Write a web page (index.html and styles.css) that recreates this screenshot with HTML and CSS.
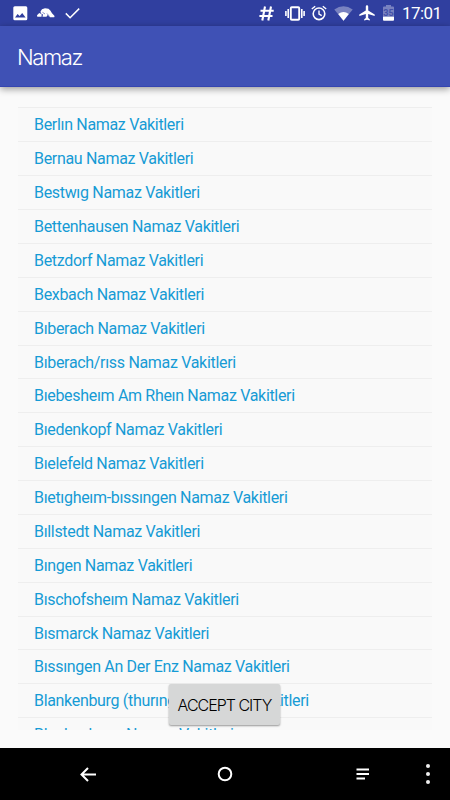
FILE: index.html
```
<!DOCTYPE html>
<html lang="tr">
<head>
    <meta charset="UTF-8">
    <meta name="viewport" content="width=device-width, initial-scale=1.0">
    <title>Namaz</title>
    <link rel="stylesheet" href="styles.css">
</head>
<body>
    <div id="app">
        <div class="status-bar">
            <svg class="icon-image" width="15" height="15" viewBox="0 0 15 15">
                <rect x="0.3" y="0.3" width="14" height="14" rx="1.5" fill="#fff"/>
                <path d="M2 11.6 4.6 8l2 2.1L9.2 7l3.4 4.6z" fill="#303f9f"/>
            </svg>
            <svg class="icon-prayer" width="18" height="10" viewBox="0 0 18 10">
                <path d="M3.500 3.500 5 1.200 8 .3l3.500.5 2 2 1.500 2.400 2.600 2.800-.4 1.300H13L10.500 7 9.500 8.800H5.500L6 6.500 4 5.500z" fill="#fff"/>
                <path d="M0 7.300 2.300 5 4.700 6.300 4.500 8.800H.3z" fill="#fff"/>
                <path d="M5.500 4.300 8 6M10 5.500 12.500 8.500" stroke="#303f9f" stroke-width="0.6"/>
            </svg>
            <svg class="icon-check" width="15" height="12" viewBox="0 0 15 12">
                <path d="M.8 6.400 5.100 10.700 14.200 1.600" fill="none" stroke="#fff" stroke-width="1.500"/>
            </svg>
            <div class="status-right">
                <svg class="icon-hash" width="15" height="15" viewBox="0 0 15 15">
                    <path d="M6 .5 3.300 14.500M12 .5 9.300 14.500M1.500 4.800H14.700M.4 10H13.500" fill="none" stroke="#fff" stroke-width="2.100"/>
                </svg>
                <svg class="icon-vibrate" width="20" height="15" viewBox="0 0 20 15">
                    <rect x="5.800" y="1.300" width="8.400" height="12.400" rx="1" fill="none" stroke="#fff" stroke-width="1.900"/>
                    <path d="M3.200 3V12M16.800 3V12M.9 5V10M19.100 5V10" stroke="#fff" stroke-width="1.600"/>
                </svg>
                <svg class="icon-alarm" width="16" height="16" viewBox="0 0 16 16">
                    <circle cx="8" cy="8.800" r="5.800" fill="none" stroke="#fff" stroke-width="1.600"/>
                    <path d="M.8 4 4.200 1.200M15.200 4 11.800 1.200M8 5.500V9l2.700 1.700" fill="none" stroke="#fff" stroke-width="1.400"/>
                </svg>
                <svg class="icon-wifi" width="19" height="15" viewBox="0 0 19 15">
                    <path d="M.3 3.500Q9.500-3 18.700 3.500L9.500 14.700z" fill="#7982c0"/>
                    <path d="M4.200 8.100Q9.500 4 14.800 8.100L9.500 14.700z" fill="#fff"/>
                </svg>
                <svg class="icon-plane" width="16" height="16" viewBox="0 0 16 16">
                    <path d="M15.700 11V9.400L9.200 5.400V1.500a1.200 1.200 0 0 0-2.400 0V5.400L.3 9.400V11l6.500-2V13L5.200 14.200V15.600L8 14.800l2.800.8V14.200L9.200 13V9z" fill="#fff"/>
                </svg>
                <svg class="icon-battery" width="11" height="16" viewBox="0 0 11 16">
                    <path d="M0 2.500Q0 1.500 1 1.500H3V0H8V1.500H10Q11 1.500 11 2.500V11H0z" fill="#7982c0"/>
                    <path d="M0 11.500H11V15Q11 15.800 10 15.800H1Q0 15.800 0 15z" fill="#fff"/>
                    <text x="5.500" y="10.900" text-anchor="middle" class="battery-level">35</text>
                </svg>
                <span class="clock">17:01</span>
            </div>
        </div>
        <div class="toolbar">
            <h1>Namaz</h1>
        </div>
        <div class="content">
            <ul class="city-list">
                <li>Berlın Namaz Vakitleri</li>
                <li>Bernau Namaz Vakitleri</li>
                <li>Bestwıg Namaz Vakitleri</li>
                <li>Bettenhausen Namaz Vakitleri</li>
                <li>Betzdorf Namaz Vakitleri</li>
                <li>Bexbach Namaz Vakitleri</li>
                <li>Bıberach Namaz Vakitleri</li>
                <li>Bıberach/rıss Namaz Vakitleri</li>
                <li>Bıebesheım Am Rheın Namaz Vakitleri</li>
                <li>Bıedenkopf Namaz Vakitleri</li>
                <li>Bıelefeld Namaz Vakitleri</li>
                <li>Bıetıgheım-bıssıngen Namaz Vakitleri</li>
                <li>Bıllstedt Namaz Vakitleri</li>
                <li>Bıngen Namaz Vakitleri</li>
                <li>Bıschofsheım Namaz Vakitleri</li>
                <li>Bısmarck Namaz Vakitleri</li>
                <li>Bıssıngen An Der Enz Namaz Vakitleri</li>
                <li>Blankenburg (thurıngen) Namaz Vakitleri</li>
                <li>Blankenheım Namaz Vakitleri</li>
            </ul>
            <button class="btn-accept">ACCEPT CITY</button>
        </div>
        <div class="nav-bar">
            <svg class="nav-back" width="17" height="15" viewBox="0 0 17 15">
                <path d="M16 7.500H1.500M8 1 1.500 7.500 8 14" fill="none" stroke="#fff" stroke-width="2"/>
            </svg>
            <svg class="nav-home" width="16" height="16" viewBox="0 0 16 16">
                <circle cx="8" cy="8" r="6.300" fill="none" stroke="#fff" stroke-width="2"/>
            </svg>
            <svg class="nav-recent" width="14" height="12" viewBox="0 0 14 12">
                <path d="M.5 1.500H13M.5 6H13M.5 10.500H9" stroke="#fff" stroke-width="2"/>
            </svg>
            <svg class="nav-more" width="4" height="20" viewBox="0 0 4 20">
                <circle cx="2" cy="2" r="2" fill="#eee"/>
                <circle cx="2" cy="10" r="2" fill="#eee"/>
                <circle cx="2" cy="18" r="2" fill="#eee"/>
            </svg>
        </div>
    </div>
</body>
</html>
```
FILE: styles.css
```
* {
    box-sizing: border-box;
}
body {
    margin: 0;
    height: 100vh;
    overflow: hidden;
    font-family: Roboto, sans-serif;
    background-color: #fafafa;
}
#app {
    display: flex;
    flex-direction: column;
    height: 100%;
}
svg {
    display: block;
    flex: none;
}
.status-bar {
    flex: none;
    height: 26px;
    display: flex;
    align-items: center;
    padding: 0 9px 0 13px;
    background-color: #303f9f;
}
.icon-prayer {
    margin-left: 9px;
}
.icon-check {
    margin-left: 10px;
}
.status-right {
    margin-left: auto;
    display: flex;
    align-items: center;
}
.icon-vibrate {
    margin-left: 11px;
}
.icon-alarm {
    margin-left: 6px;
}
.icon-wifi {
    margin-left: 7px;
}
.icon-plane {
    margin-left: 6px;
}
.icon-battery {
    margin-left: 8px;
}
.battery-level {
    font-size: 9px;
    font-weight: bold;
    fill: #4450a8;
}
.clock {
    margin-left: 8px;
    padding-top: 1px;
    font-size: 17px;
    letter-spacing: -0.6px;
    line-height: 25px;
    color: #fff;
    width: 39px;
    white-space: nowrap;
}
.toolbar {
    flex: none;
    height: 61px;
    display: flex;
    align-items: center;
    padding: 2px 0 0 17px;
    background-color: #3f51b5;
    border-bottom: 1px solid #3545b0;
    box-shadow: 0 2px 7px rgba(0,0,0,0.4);
    z-index: 1;
}
h1 {
    margin: 0;
    font-family: Inter, sans-serif;
    font-size: 22px;
    font-weight: 300;
    letter-spacing: -1.4px;
    color: #fff;
}
.content {
    flex: 1;
    min-height: 0;
    padding: 20.4px 18px 17px;
    position: relative;
}
.city-list {
    list-style: none;
    margin: 0;
    padding: 0;
    height: 622.6px;
    overflow: hidden;
    background-color: #f9f9f9;
}
.city-list li {
    height: 33.88px;
    padding-left: 16px;
    border-top: 1px solid #eee;
    font-size: 16px;
    letter-spacing: -0.32px;
    line-height: 33px;
    color: #169bd5;
    white-space: nowrap;
}
.btn-accept {
    position: absolute;
    left: 169px;
    bottom: 23px;
    width: 111px;
    height: 41px;
    padding: 0;
    border: none;
    border-radius: 2px;
    background-color: #d6d7d7;
    box-shadow: 0 1px 2px rgba(0,0,0,0.4);
    font-family: Inter, sans-serif;
    font-size: 16px;
    font-weight: 300;
    letter-spacing: -1px;
    color: #000;
}
.nav-bar {
    flex: none;
    height: 52px;
    display: flex;
    align-items: center;
    padding: 0 20px 0 80px;
    background-color: #000;
}
.nav-home {
    margin-left: 120px;
}
.nav-recent {
    margin-left: 123px;
}
.nav-more {
    margin-left: auto;
}
```
